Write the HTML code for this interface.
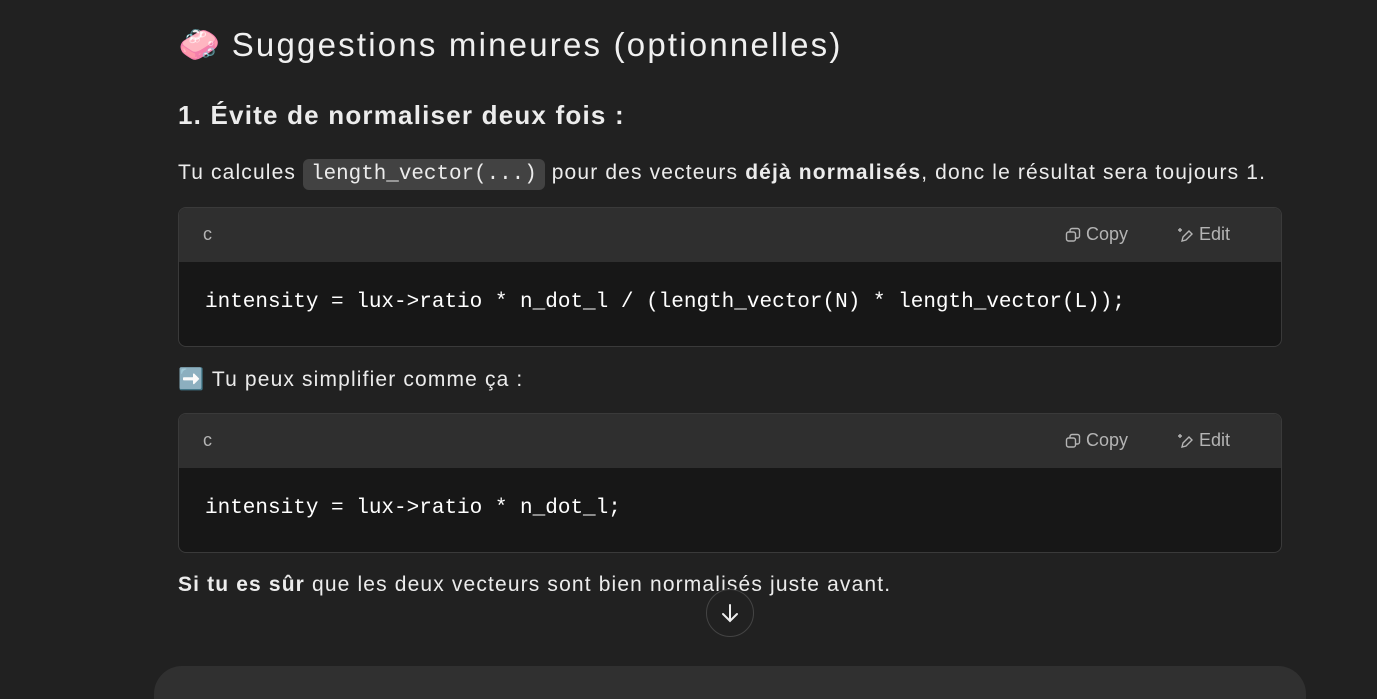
<!DOCTYPE html>
<html><head><meta charset="utf-8"><style>
html,body{margin:0;overflow:hidden}
body{background:#212121;width:1377px;height:699px;font-family:"Liberation Sans",sans-serif;color:#ececec;position:relative}
.a{position:absolute;white-space:nowrap}
h2{position:absolute;left:178px;top:25px;margin:0;font-size:33px;font-weight:500;color:#f0f0f0;letter-spacing:2.2px;white-space:nowrap}
h3{position:absolute;left:178px;top:100px;margin:0;font-size:26px;font-weight:600;letter-spacing:1.2px;white-space:nowrap}
p{position:absolute;left:178px;margin:0;font-size:21px;letter-spacing:1.15px;white-space:nowrap}
code{font-family:"Liberation Mono",monospace;font-size:20.9px;letter-spacing:0;background:#424242;border-radius:6px;padding:4px 8px}
.cb{position:absolute;left:178px;width:1102px;border:1px solid #3a3a3a;border-radius:8px;overflow:hidden;background:#171717}
.hd{height:54px;background:#2f2f2f;position:relative;font-size:18px;color:#b4b4b4}
.hd .l{position:absolute;left:24px;top:16px}
.hd .c{position:absolute;left:886px;top:16px}
.hd .e{position:absolute;left:999px;top:16px}
.bd{height:84px;font-family:"Liberation Mono",monospace;font-size:21px;color:#fff;padding-left:26px;line-height:82px}
svg{vertical-align:-3px}
</style></head><body>
<h2><span style="font-size:34px;letter-spacing:0">🧼</span> Suggestions mineures (optionnelles)</h2>
<h3>1. Évite de normaliser deux fois :</h3>
<p style="top:161px">Tu calcules <code>length_vector(...)</code> pour des vecteurs <b>déjà normalisés</b>, donc le résultat sera toujours 1.</p>
<div class="cb" style="top:207px"><div class="hd"><span class="l">c</span>
<span class="c"><svg width="16" height="16" viewBox="0 0 16 16" fill="none" stroke="#b4b4b4" stroke-width="1.4"><rect x="1.5" y="5" width="9" height="9" rx="2"/><path d="M5 5V3.5a2 2 0 0 1 2-2h5.5a2 2 0 0 1 2 2V9a2 2 0 0 1-2 2H10.5"/></svg> Copy</span>
<span class="e"><svg width="16" height="16" viewBox="0 0 16 16" fill="none" stroke="#b4b4b4" stroke-width="1.4"><path d="M4 14l1-4 6-6 3 3-6 6z M2 1v4 M0 3h4"/></svg> Edit</span></div>
<div class="bd">intensity = lux-&gt;ratio * n_dot_l / (length_vector(N) * length_vector(L));</div></div>
<p style="top:368px">➡️ Tu peux simplifier comme ça :</p>
<div class="cb" style="top:413px"><div class="hd"><span class="l">c</span>
<span class="c"><svg width="16" height="16" viewBox="0 0 16 16" fill="none" stroke="#b4b4b4" stroke-width="1.4"><rect x="1.5" y="5" width="9" height="9" rx="2"/><path d="M5 5V3.5a2 2 0 0 1 2-2h5.5a2 2 0 0 1 2 2V9a2 2 0 0 1-2 2H10.5"/></svg> Copy</span>
<span class="e"><svg width="16" height="16" viewBox="0 0 16 16" fill="none" stroke="#b4b4b4" stroke-width="1.4"><path d="M4 14l1-4 6-6 3 3-6 6z M2 1v4 M0 3h4"/></svg> Edit</span></div>
<div class="bd">intensity = lux-&gt;ratio * n_dot_l;</div></div>
<p style="top:573px"><b>Si tu es sûr</b> que les deux vecteurs sont bien normalisés juste avant.</p>
<div class="a" style="left:706px;top:589px;width:46px;height:46px;border-radius:50%;border:1px solid #444;background:#212121;display:flex;align-items:center;justify-content:center"><svg width="22" height="22" viewBox="0 0 22 22" fill="none" stroke="#eee" stroke-width="2" stroke-linecap="round"><path d="M11 3v16M4 12l7 7 7-7"/></svg></div>
<div class="a" style="left:154px;top:666px;width:1152px;height:33px;border-radius:28px 28px 0 0;background:#303030"></div>
</body></html>
